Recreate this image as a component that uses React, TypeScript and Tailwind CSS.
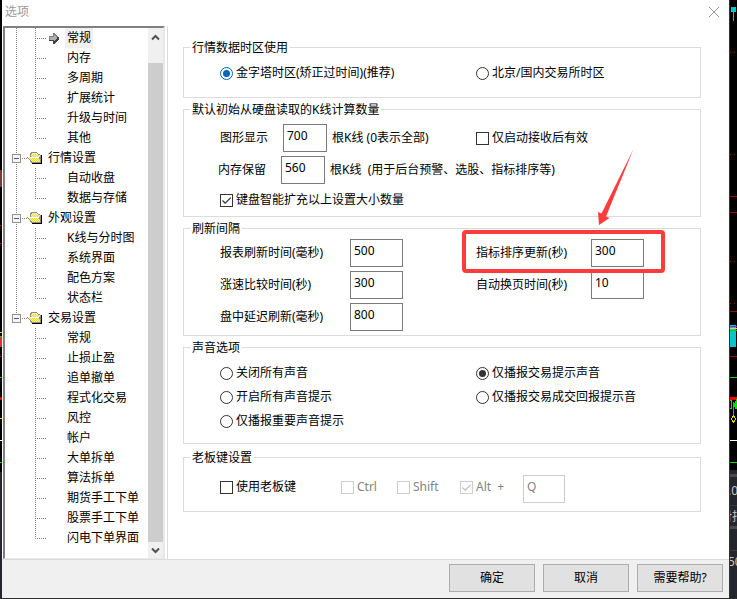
import React, { useState } from 'react';

type Item = { label: string; active?: boolean };
type Group = { title?: string; items: Item[] };

const TREE: Group[] = [
  {
    items: [
      { label: '常规', active: true },
      { label: '内存' },
      { label: '多周期' },
      { label: '扩展统计' },
      { label: '升级与时间' },
      { label: '其他' },
    ],
  },
  { title: '行情设置', items: [{ label: '自动收盘' }, { label: '数据与存储' }] },
  {
    title: '外观设置',
    items: [{ label: 'K线与分时图' }, { label: '系统界面' }, { label: '配色方案' }, { label: '状态栏' }],
  },
  {
    title: '交易设置',
    items: [
      { label: '常规' },
      { label: '止损止盈' },
      { label: '追单撤单' },
      { label: '程式化交易' },
      { label: '风控' },
      { label: '帐户' },
      { label: '大单拆单' },
      { label: '算法拆单' },
      { label: '期货手工下单' },
      { label: '股票手工下单' },
      { label: '闪电下单界面' },
    ],
  },
];

// 树形连接虚线
const Lines: React.FC<{ trunk: boolean; last: boolean }> = ({ trunk, last }) => (
  <svg width="42" height="20" className="shrink-0" shapeRendering="crispEdges" stroke="#808080" strokeDasharray="1 1">
    {trunk && <path d="M11.5 0V20" />}
    <path d={last ? 'M30.5 0V11' : 'M30.5 0V20'} />
    <path d="M32 10.5H42" />
  </svg>
);

const ArrowIcon = () => (
  <svg width="10" height="11" className="shrink-0" shapeRendering="crispEdges">
    <path d="M0 3h4V0h1l5 5v1l-5 5H4V8H0z" fill="#404040" />
    <path d="M0 3h4V0h1l4 4H4v3H0z" fill="#808080" />
    <path d="M1 4h4V2l3 3-3 3V7H1z" fill="#b0b0b0" />
  </svg>
);

const FolderIcon = () => (
  <svg width="16" height="14" className="shrink-0" shapeRendering="crispEdges">
    {/* 右下黑色阴影 */}
    <path d="M13 4h2v9H5v-1h8z" fill="#000" />
    <path d="M3 2h1V1h6v1h1v1h2v1h1v8H4v-1H3V9H2V8H1V7H0V6h3z" fill="#8c8c8c" />
    <path d="M4 3h1V2h5v1h1v1h2v2H4z" fill="#f2efb0" />
    <path d="M4 3.5h6M5 4.5h8M4 5.5h9" stroke="#e6e040" strokeDasharray="1 1" />
    <path d="M1 6h11v1H1z" fill="#fff" />
    <path d="M2 7h10v1h1v3H5v-1H4V9H3V8H2z" fill="#f7f4a0" />
    <path d="M3 7.500h9M4 8.500h9M5 9.500h8M6 10.500h7" stroke="#e6dc20" strokeDasharray="1 1" />
  </svg>
);

const TreeGroup: React.FC<{ group: Group; trunk: boolean }> = ({ group, trunk }) => {
  const [open, setOpen] = useState(true);
  return (
    <li>
      {group.title && (
        <div className="flex h-5 items-center">
          <button
            type="button"
            aria-label={group.title}
            aria-expanded={open}
            onClick={() => setOpen(!open)}
            className="h-5 w-[22px] shrink-0"
          >
            <svg width="22" height="20" shapeRendering="crispEdges">
              <path d={trunk ? 'M11.5 0V20' : 'M11.5 0V6'} stroke="#808080" strokeDasharray="1 1" />
              <path d="M17 10.5H22" stroke="#808080" strokeDasharray="1 1" />
              <rect x="7.5" y="6.5" width="8" height="8" fill="#f6f6f6" stroke="#919191" />
              <path d={open ? 'M9 10.5H14' : 'M9 10.5H14M11.5 8V13'} stroke="#3c5a9e" />
            </svg>
          </button>
          <FolderIcon />
          <span className="px-[5px]">{group.title}</span>
        </div>
      )}
      {open && (
        <ul>
          {group.items.map((item, i) => (
            <li key={item.label} className="flex h-5 items-center">
              <Lines trunk={trunk} last={i === group.items.length - 1} />
              <span className="w-[18px] shrink-0 pl-[2px]">{item.active && <ArrowIcon />}</span>
              <a href="#" className={item.active ? 'bg-[#f0f0f0] px-[2px] leading-5' : 'px-[2px] leading-5'}>
                {item.label}
              </a>
            </li>
          ))}
        </ul>
      )}
    </li>
  );
};

const Group: React.FC<{ title: string; className?: string; children: React.ReactNode }> = ({
  title,
  className = '',
  children,
}) => (
  <fieldset className={`min-w-0 border border-[#dcdcdc] pl-9 ${className}`}>
    <legend className="-ml-[30px] h-4 px-[2px] leading-[18px]">{title}</legend>
    {children}
  </fieldset>
);

const CONTROL = 'relative size-[13px] shrink-0 appearance-none border bg-white';

const Radio: React.FC<{ name: string; label: string; checked?: boolean; blue?: boolean }> = ({
  name,
  label,
  checked,
  blue,
}) => (
  <label className="flex h-6 items-center gap-[3px]">
    <input
      type="radio"
      name={name}
      defaultChecked={checked}
      className={`${CONTROL} rounded-full checked:before:absolute checked:before:inset-[2px] checked:before:rounded-full ${
        blue ? 'border-[#0067b8] before:bg-[#0067b8]' : 'border-[#333333] before:bg-[#333333]'
      }`}
    />
    {label}
  </label>
);

const Check: React.FC<{ label: string; checked?: boolean; disabled?: boolean }> = ({ label, checked, disabled }) => (
  <label className={`flex h-6 items-center gap-[3px] whitespace-pre ${disabled ? 'text-[#838383]' : ''}`}>
    <span className="relative flex">
      <input
        type="checkbox"
        defaultChecked={checked}
        disabled={disabled}
        className={`${CONTROL} peer ${disabled ? 'border-[#cccccc]' : 'border-[#333333]'}`}
      />
      <svg
        className="pointer-events-none absolute inset-0 hidden peer-checked:block"
        width="13"
        height="13"
        fill="none"
        stroke={disabled ? '#c0c0c0' : '#333333'}
        strokeWidth="1.3"
      >
        <path d="M2.5 6.5L5.2 9.2L10.8 3.6" />
      </svg>
    </span>
    {label}
  </label>
);

const BOX = 'h-7 border border-[#7a7a7a] bg-white px-[3px] pb-[6px] disabled:border-[#cccccc] disabled:text-[#838383]';

const Interval: React.FC<{ id: string; label: string; value: string; wide?: boolean }> = ({ id, label, value, wide }) => (
  <div className="flex h-7 items-center">
    <label htmlFor={id} className={wide ? 'w-[130px] shrink-0' : 'w-[115px] shrink-0'}>
      {label}
    </label>
    <input id={id} defaultValue={value} className={`${BOX} w-[53px]`} />
  </div>
);

// 红色标注框和箭头
const Marker = () => (
  <>
    <div className="pointer-events-none absolute -top-[9px] -left-[14px] z-10 h-[43px] w-[203px] rounded-[4px] border-4 border-[#ff3b3b]" />
    <svg className="pointer-events-none absolute -top-[90px] left-[122px] z-10" width="36" height="76">
      <path d="M35.5 0L8 67.500L11.500 69L1 76L0 63L3.500 64.500Z" fill="#ff3b3b" />
    </svg>
  </>
);

const COLS = 'grid grid-cols-[256px_1fr] items-center';
const BUTTON = 'h-7 w-[86px] border border-[#adadad] bg-[#e1e1e1]';

const App: React.FC = () => {
  return (
    <div className="flex min-h-screen overflow-hidden bg-[#2b2b2d] pb-px font-['Noto_Sans','Noto_Sans_CJK_SC',sans-serif] text-[12px] leading-4 text-black">
      {/* 左侧露出的背景 */}
      <svg className="w-[2px] shrink-0 self-stretch" shapeRendering="crispEdges">
        <rect width="2" height="600" fill="#000" />
        <rect y="170" width="2" height="17" fill="#7a3a3a" />
        <path d="M0 225.500H2M0 243.500H2M0 356.500H2" stroke="#a00000" />
        <path d="M0 332.500H2M0 418.500H2" stroke="#e0e000" />
        <path d="M0 336.500H2M0 377.500H2M0 462.500H2" stroke="#00d000" />
        <path d="M0 440.500H2" stroke="#fff" />
        <rect y="337" width="2" height="10" fill="#e03030" />
        <rect y="397" width="2" height="3" fill="#f00000" />
        <rect y="472" width="2" height="127" fill="#24262b" />
      </svg>

      <main className="flex min-w-0 flex-1 flex-col bg-white">
        <header className="flex h-[26px] items-center justify-between pr-[9px] pl-[3px] text-[#999999]">
          <h1 className="pb-[2px]">选项</h1>
          <button type="button" aria-label="关闭" className="pb-[2px]">
            <svg width="12" height="12" stroke="#999999" fill="none">
              <path d="M1 1L11 11M11 1L1 11" />
            </svg>
          </button>
        </header>

        <div className="flex flex-1">
          <nav className="ml-px flex w-[162px] shrink-0 border-2 border-b border-t-[#808080] border-r-[#e8e8e8] border-b-[#e8e8e8] border-l-[#808080]">
            <ul className="min-w-0 flex-1 overflow-hidden whitespace-nowrap">
              {TREE.map((group, i) => (
                <TreeGroup key={i} group={group} trunk={i < TREE.length - 1} />
              ))}
            </ul>
            <div className="flex w-[15px] shrink-0 flex-col bg-[#f0f0f0]">
              <button type="button" aria-label="向上滚动" className="flex h-[35px] justify-center pt-[6px]">
                <svg width="9" height="7" fill="none" stroke="#505050" strokeWidth="2">
                  <path d="M1 5.500L4.500 2L8 5.500" />
                </svg>
              </button>
              <div className="flex-1 bg-[#cdcdcd]" />
              <button type="button" aria-label="向下滚动" className="flex h-4 items-center justify-center">
                <svg width="9" height="7" fill="none" stroke="#505050" strokeWidth="2">
                  <path d="M1 1.500L4.500 5L8 1.500" />
                </svg>
              </button>
            </div>
          </nav>

          <form id="options" className="ml-[2px] flex min-w-0 flex-1 flex-col gap-[3px] border-l border-[#dcdcdc] pt-[13px] pr-7 pl-[15px] whitespace-nowrap">
            <Group title="行情数据时区使用" className="pt-[6px] pb-3">
              <div className={COLS}>
                <Radio name="zone" label="金字塔时区(矫正过时间)(推荐)" checked blue />
                <Radio name="zone" label="北京/国内交易所时区" />
              </div>
            </Group>

            <Group title="默认初始从硬盘读取的K线计算数量" className="pt-[7px] pb-1">
              <div className="flex flex-col gap-1">
                <div className={COLS}>
                  <div className="flex items-center">
                    <label htmlFor="chart" className="w-[63px]">图形显示</label>
                    <input id="chart" defaultValue="700" className={`${BOX} w-11`} />
                    <span className="pl-[5px]">根K线 (0表示全部)</span>
                  </div>
                  <Check label="仅启动接收后有效" />
                </div>
                <div className="-ml-[2px] flex items-center">
                  <label htmlFor="memory" className="w-[63px]">内存保留</label>
                  <input id="memory" defaultValue="560" className={`${BOX} w-11`} />
                  <span className="pl-[5px]">根K线&nbsp; (用于后台预警、选股、指标排序等)</span>
                </div>
                <Check label="键盘智能扩充以上设置大小数量" checked />
              </div>
            </Group>

            <Group title="刷新间隔" className="pt-[3px] pb-1">
              <div className={`${COLS} gap-y-1`}>
                <Interval id="report" label="报表刷新时间(毫秒)" value="500" wide />
                <div className="relative">
                  <Interval id="sort" label="指标排序更新(秒)" value="300" />
                  <Marker />
                </div>
                <Interval id="speed" label="涨速比较时间(秒)" value="300" wide />
                <Interval id="page" label="自动换页时间(秒)" value="10" />
                <Interval id="delay" label="盘中延迟刷新(毫秒)" value="800" wide />
              </div>
            </Group>

            <Group title="声音选项" className="pt-[6px] pb-[10px]">
              <div className={COLS}>
                <Radio name="sound" label="关闭所有声音" />
                <Radio name="sound" label="仅播报交易提示声音" checked />
                <Radio name="sound" label="开启所有声音提示" />
                <Radio name="sound" label="仅播报交易成交回报提示音" />
                <Radio name="sound" label="仅播报重要声音提示" />
              </div>
            </Group>

            <Group title="老板键设置" className="mt-[2px] pt-[10px] pb-2">
              <div className="flex items-start">
                <div className="w-[121px]">
                  <Check label="使用老板键" />
                </div>
                <div className="w-14">
                  <Check label="Ctrl" disabled />
                </div>
                <div className="w-[63px]">
                  <Check label="Shift" disabled />
                </div>
                <div className="w-[63px]">
                  <Check label="Alt  +" checked disabled />
                </div>
                <input aria-label="老板键" defaultValue="Q" disabled className={`${BOX} w-[42px]`} />
              </div>
            </Group>
          </form>
        </div>

        <footer className="flex h-[39px] items-start justify-end gap-2 border-t border-[#dcdcdc] bg-[#f0f0f0] pt-1 pr-[6px]">
          <button type="submit" form="options" className={BUTTON}>确定</button>
          <button type="button" className={BUTTON}>取消</button>
          <button type="button" className={BUTTON}>需要帮助?</button>
        </footer>
      </main>

      {/* 右侧露出的行情背景 */}
      <svg className="w-2 shrink-0 self-stretch" shapeRendering="crispEdges">
        <rect width="8" height="600" fill="#000" />
        <rect x="2" y="7" width="5" height="5" fill="#00c8d0" />
        <path d="M4.500 12V21" stroke="#00c8d0" />
        <path d="M1 52.500H8M1 154.500H8M1 261.500H8M1 303.500H8" stroke="#900000" strokeDasharray="1 3" />
        <path d="M0 196.500H8M0 212.500H8M0 311.500H8M0 356.500H8" stroke="#a00000" />
        <rect x="1" y="325" width="6" height="22" fill="#00c8d0" />
        <path d="M0 326.500H8" stroke="#d000d0" />
        <path d="M0 328.500H8" stroke="#e0e000" />
        <path d="M0 330.500H8M0 377.500H8M0 462.500H8" stroke="#00d000" />
        <rect y="397" width="8" height="3" fill="#f00000" />
        <path d="M1 400h2v1H1zM2 401h1v8H2zM1 408h2v1H1zM4 402h1v4H4zM8 399v10H6v-2H5v-4h1v-2h1v-2z" fill="#00e000" />
        <path d="M4.500 406V416" stroke="#808080" />
        <path d="M4.500 416L7 419L4.500 422L2 419Z" stroke="#e0e000" fill="none" />
        <path d="M0 440.500H8" stroke="#fff" />
        <rect y="470" width="8" height="129" fill="#24262b" />
        <path d="M0 475H8M0 527H8" stroke="#4a4a4c" strokeWidth="3" />
        <path d="M0 505.500H8M0 550.500H8" stroke="#3c3c3e" />
        <g fill="#c8c8c8" fontSize="12">
          <text x="-1" y="495">.0</text>
          <text x="-9" y="521">对指</text>
          <text x="-1" y="566">50</text>
        </g>
        <path d="M0.500 0V600" stroke="#333" />
      </svg>
    </div>
  );
};

export default App;
